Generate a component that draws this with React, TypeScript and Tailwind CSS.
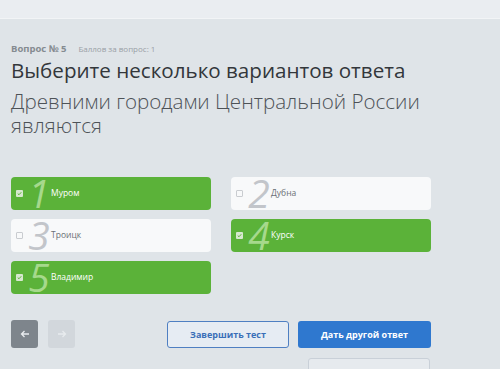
import React from "react";

type Opt = { n: number; label: string; on: boolean };

const opts: Opt[] = [
  { n: 1, label: "Муром", on: true },
  { n: 2, label: "Дубна", on: false },
  { n: 3, label: "Троицк", on: false },
  { n: 4, label: "Курск", on: true },
  { n: 5, label: "Владимир", on: true },
];

function Option({ o }: { o: Opt }) {
  return (
    <div
      className={
        "flex items-center h-[33px] rounded-[4px] pl-[5px] overflow-hidden " +
        (o.on ? "bg-[#5bb239]" : "bg-[#f8f9fa]")
      }
    >
      <div
        className={
          "w-[7px] h-[7px] rounded-[1px] flex items-center justify-center " +
          (o.on ? "bg-[#d7e8d0]" : "border border-[#c9ccd0] bg-[#f8f9fa]")
        }
      >
        {o.on && (
          <svg width="5" height="5" viewBox="0 0 10 10">
            <path d="M1.5 5.2 L4 7.5 L8.5 2.5" stroke="#5bb239" strokeWidth="2" fill="none" />
          </svg>
        )}
      </div>
      <svg width="24" height="33" viewBox="0 0 24 33" className="ml-[4px] shrink-0">
        <text
          x="12"
          y="30.5"
          textAnchor="middle"
          fontSize="39"
          fontStyle="italic"
          fontFamily='"Open Sans", "Noto Sans", sans-serif'
          fill={o.on ? "#a6d98c" : "#c2c5ca"}
        >
          {o.n}
        </text>
      </svg>
      <span
        className={
          "ml-0 text-[8.5px] " + (o.on ? "text-white" : "text-[#6b7075]")
        }
      >
        {o.label}
      </span>
    </div>
  );
}

export default function App() {
  return (
    <div
      className="w-[500px] h-[369px] overflow-hidden bg-[#dfe4e8] flex flex-col"
      style={{ fontFamily: '"Open Sans", "Noto Sans", sans-serif' }}
    >
      <div className="h-[19px] bg-[#eaedf1] border-b border-[#f2f4f6] shrink-0" />
      <div className="px-[11px] pt-[23px]">
        <div className="flex items-baseline gap-[12px]">
          <span className="text-[9.5px] font-bold text-[#858b91]">Вопрос № 5</span>
          <span className="text-[8px] text-[#9aa0a6]">Баллов за вопрос: 1</span>
        </div>
        <div className="mt-[1px] text-[20.6px] leading-[26px] text-[#33373b]">
          Выберите несколько вариантов ответа
        </div>
        <div className="mt-[6px] text-[20.6px] leading-[24px] font-light text-[#4d5257] w-[430px]">
          Древними городами Центральной России являются
        </div>
        <div className="mt-[40px] grid grid-cols-[200px_200px] gap-x-[20px] gap-y-[9px]">
          {opts.map((o) => (
            <Option key={o.n} o={o} />
          ))}
        </div>
        <div className="mt-[26px] flex items-center">
          <div className="w-[27px] h-[28px] rounded-[3px] bg-[#7e858c] flex items-center justify-center">
            <svg width="10" height="10" viewBox="0 0 10 10">
              <path d="M9 5 H1.5 M4.5 2 L1.5 5 L4.5 8" stroke="#e9ecef" strokeWidth="1.3" fill="none" />
            </svg>
          </div>
          <div className="ml-[10px] w-[27px] h-[28px] rounded-[3px] bg-[#d2d7dc] flex items-center justify-center">
            <svg width="10" height="10" viewBox="0 0 10 10">
              <path d="M1 5 H8.5 M5.5 2 L8.5 5 L5.5 8" stroke="#e8ebee" strokeWidth="1.3" fill="none" />
            </svg>
          </div>
          <div className="ml-[92px] w-[122px] h-[27px] rounded-[3px] border border-[#4f7fc2] bg-[#e6ecf3] flex items-center justify-center text-[9px] font-bold text-[#3a6fb8]">
            Завершить тест
          </div>
          <div className="ml-[9px] w-[133px] h-[27px] rounded-[3px] bg-[#2f78cf] flex items-center justify-center text-[9px] font-bold text-white">
            Дать другой ответ
          </div>
        </div>
        <div className="mt-[10px] ml-[297px] w-[122px] h-[20px] rounded-[3px] border border-[#c9d0d8] bg-[#e6eaee]" />
      </div>
    </div>
  );
}
